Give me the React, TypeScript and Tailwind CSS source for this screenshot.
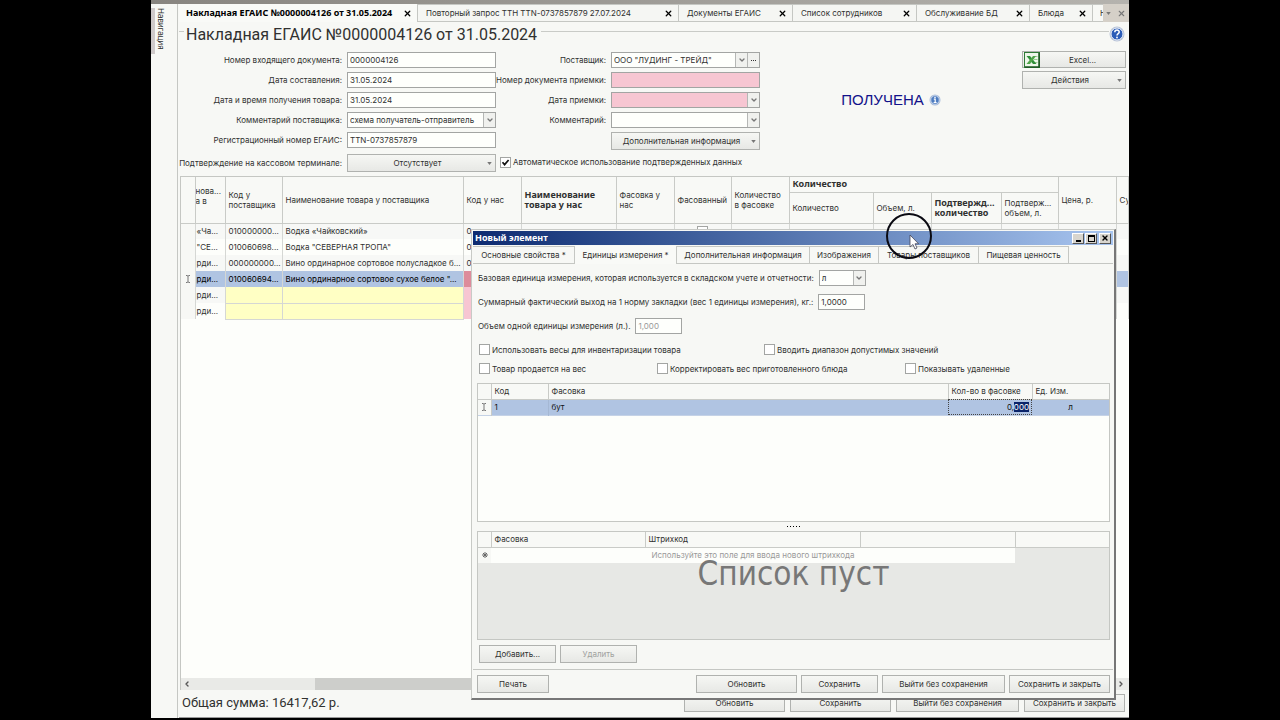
import React from 'react';
import { ChevronDown, ChevronLeft, ChevronRight, X } from 'lucide-react';

const documentTabs = [
  { title: 'Повторный запрос ТТН TTN-0737857879 27.07.2024', width: 'w-[261px]' },
  { title: 'Документы ЕГАИС', width: 'w-[114px]' },
  { title: 'Список сотрудников', width: 'w-[124px]' },
  { title: 'Обслуживание БД', width: 'w-[113px]' },
  { title: 'Блюда', width: 'w-[63px]' },
];

const dialogTabs = [
  { title: 'Основные свойства *', width: 'w-[102px]' },
  { title: 'Единицы измерения *', width: 'w-[102px]', active: true },
  { title: 'Дополнительная информация', width: 'w-[133px]' },
  { title: 'Изображения', width: 'w-[69px]' },
  { title: 'Товары поставщиков', width: 'w-[100px]' },
  { title: 'Пищевая ценность', width: 'w-[90px]' },
];

const invoiceRows = [
  { short: '«Ча...', code: '010000000...', name: 'Водка «Чайковский»', own: '0' },
  { short: '"СЕ...', code: '010060698...', name: 'Водка "СЕВЕРНАЯ ТРОПА"', own: '0' },
  { short: 'рди...', code: '000000000...', name: 'Вино ординарное сортовое полусладкое б...', own: '0' },
  { short: 'рди...', code: '010060694...', name: 'Вино ординарное сортовое сухое белое "...', own: '', selected: true },
  { short: 'рди...', code: '', name: '', own: '' },
  { short: 'рди...', code: '', name: '', own: '' },
];

const Arrow = ({ className = '' }: { className?: string }) => (
  <svg viewBox="0 0 6 4" className={`h-[3px] w-[5px] shrink-0 fill-[#777] ${className}`}>
    <path d="M0 0h6L3 4z" />
  </svg>
);

const EditMark = () => (
  <svg viewBox="0 0 6 8" className="mx-auto h-2 w-[6px]" fill="none" stroke="#777">
    <path d="M1 .5h1.2L3 1.2 3.8.5H5M1 7.5h1.2l.8-.7.8.7H5M3 1v6" />
  </svg>
);

interface FieldProps {
  id: string;
  label: string;
  value?: string;
  kind?: 'text' | 'select';
  pink?: boolean;
  more?: boolean;
}

const Field: React.FC<FieldProps> = ({ id, label, value = '', kind = 'text', pink, more }) => (
  <div className="flex h-5 items-center justify-end gap-[5px]">
    <label htmlFor={id} className="whitespace-nowrap">
      {label}
    </label>
    <div
      className={`flex h-4 w-[149px] shrink-0 border border-[#a3a5a3] ${
        pink ? 'bg-[#f7c6d2]' : 'bg-[#fefffc]'
      }`}
    >
      {kind === 'text' ? (
        <input id={id} defaultValue={value} className="w-full min-w-0 px-[2px] outline-none" />
      ) : (
        <div className="relative flex min-w-0 flex-1">
          <select id={id} className="w-full appearance-none pl-[2px] outline-none">
            <option>{value}</option>
          </select>
          <span className="pointer-events-none absolute inset-y-0 right-0 flex w-3 items-center justify-center border-l border-[#b5b7b5] bg-[#f0f1ee]">
            <ChevronDown size={8} strokeWidth={4} className="text-[#777]" />
          </span>
        </div>
      )}
      {more && (
        <button aria-label="Выбрать" className="flex w-3 items-center justify-center gap-px border-l border-[#b5b7b5] bg-[#f0f1ee]">
          <i className="size-px bg-[#333]" />
          <i className="size-px bg-[#333]" />
          <i className="size-px bg-[#333]" />
        </button>
      )}
    </div>
  </div>
);

const Button: React.FC<{
  children: React.ReactNode;
  className?: string;
  menu?: boolean;
  disabled?: boolean;
}> = ({ children, className = '', menu, disabled }) => (
  <button
    disabled={disabled}
    className={`flex h-[18px] shrink-0 items-center justify-center whitespace-nowrap border border-[#b0b2af] bg-linear-to-b from-[#f6f7f4] to-[#e7e8e5] disabled:text-[#a0a19e] ${className}`}
  >
    {menu ? (
      <>
        <span className="flex-1">{children}</span>
        <Arrow className="mr-[3px]" />
      </>
    ) : (
      children
    )}
  </button>
);

const Check: React.FC<{ label: string; className?: string; checked?: boolean }> = ({
  label,
  className = '',
  checked,
}) => (
  <label className={`flex shrink-0 items-center gap-[2px] whitespace-nowrap ${className}`}>
    <span className="relative flex size-[11px]">
      <input
        type="checkbox"
        defaultChecked={checked}
        className="size-[11px] appearance-none border border-[#a3a5a3] bg-white"
      />
      {checked && (
        <svg viewBox="0 0 11 11" className="pointer-events-none absolute inset-0" fill="none" stroke="#111" strokeWidth="1.7">
          <path d="M2.5 5.2 4.6 7.6 8.6 3" />
        </svg>
      )}
    </span>
    {label}
  </label>
);

const HelpIcon = () => (
  <svg viewBox="0 0 16 16" className="size-4 shrink-0">
    <circle cx="8" cy="8" r="7.5" fill="#b9c4d8" />
    <circle cx="8" cy="8" r="6" fill="#2c5db8" stroke="#e9effa" />
    <path d="M5.8 6.3c0-3 4.6-2.8 4.4-.2C10.1 7.7 8 7.5 8 9.5" fill="none" stroke="#fff" strokeWidth="1.5" />
    <circle cx="8" cy="11.5" r=".9" fill="#fff" />
  </svg>
);

const InfoIcon = () => (
  <svg viewBox="0 0 12 12" className="size-3">
    <circle cx="6" cy="6" r="5.5" fill="#a9bcd9" />
    <circle cx="6" cy="6" r="4.2" fill="#4d7cc0" stroke="#dde7f5" strokeWidth=".7" />
    <path d="M4.8 5.2h1.4v3M4.6 8.5h3" fill="none" stroke="#fff" strokeWidth="1.2" />
    <circle cx="6" cy="3.5" r=".8" fill="#fff" />
  </svg>
);

const ExcelIcon = () => (
  <svg viewBox="0 0 16 16" className="size-4 shrink-0">
    <rect x=".5" y=".5" width="15" height="15" fill="#eef6ea" stroke="#2f7a35" />
    <path d="M15 1v14H1" fill="none" stroke="#1d5522" strokeWidth="1.5" />
    <path d="M10 4.5h3.5M10 7.5h3.5M10.5 10.5h3" stroke="#9ccf94" />
    <path d="M2.5 4H6l6.5 8H9z" fill="#2f8f38" />
    <path d="M12 4H9L2.5 12H6z" fill="#4fa549" />
  </svg>
);

const DocumentTabs = () => (
  <div role="tablist" className="flex h-[18px] overflow-hidden">
    <div role="tab" aria-selected="true" className="flex w-[239px] shrink-0 items-center justify-between border-r border-[#c5c7c3] bg-[#f9faf7] pl-[7px] pr-[5px] text-black">
      <span className="whitespace-nowrap font-['Noto_Sans',sans-serif] text-[9px] font-bold">
        Накладная ЕГАИС №0000004126 от 31.05.2024
      </span>
      <X size={9} strokeWidth={3.5} />
    </div>
    {documentTabs.map((tab) => (
      <div
        key={tab.title}
        role="tab"
        className={`flex shrink-0 items-center justify-between border-r border-b border-t border-[#c5c7c3] bg-[#f5f6f3] pl-[8px] pr-[5px] ${tab.width}`}
      >
        <span className="whitespace-nowrap">{tab.title}</span>
        <X size={9} strokeWidth={3.5} className="text-black" />
      </div>
    ))}
    <div role="tab" className="w-[10px] shrink-0 overflow-hidden border-b border-t border-[#c5c7c3] pl-[7px] leading-4">
      Н
    </div>
    <div className="flex flex-1 items-center justify-around bg-[#d5d0c8]">
      <Arrow />
      <X size={9} strokeWidth={3} className="text-[#777]" />
    </div>
  </div>
);

const InvoiceTable = () => (
  <table className="w-full table-fixed border-collapse text-left">
    <colgroup>
      <col className="w-[14px]" />
      <col className="w-[30px]" />
      <col className="w-[57px]" />
      <col className="w-[181px]" />
      <col className="w-[58px]" />
      <col className="w-[95px]" />
      <col className="w-[58px]" />
      <col className="w-[57px]" />
      <col className="w-[58px]" />
      <col className="w-[84px]" />
      <col className="w-[58px]" />
      <col className="w-[70px]" />
      <col className="w-[57px]" />
      <col className="w-[58px]" />
      <col />
    </colgroup>
    <thead className="bg-[#f8f9f6] leading-[10px] [&_th]:overflow-hidden [&_th]:border-r [&_th]:border-b [&_th]:border-[#c9cbc7] [&_th]:px-[3px] [&_th]:py-0">
      <tr className="h-[15px] [&_th]:font-normal">
        <th rowSpan={2} />
        <th rowSpan={2} className="whitespace-nowrap !px-0 !pb-2">нова...<br />а в</th>
        <th rowSpan={2}>Код у поставщика</th>
        <th rowSpan={2}>Наименование товара у поставщика</th>
        <th rowSpan={2}>Код у нас</th>
        <th rowSpan={2} className="font-['Noto_Sans',sans-serif] text-[9px] !font-bold">Наименование товара у нас</th>
        <th rowSpan={2}>Фасовка у нас</th>
        <th rowSpan={2}>Фасованный</th>
        <th rowSpan={2} className="whitespace-nowrap">Количество<br />в фасовке</th>
        <th colSpan={4} className="font-['Noto_Sans',sans-serif] text-[9px] !font-bold">Количество</th>
        <th rowSpan={2}>Цена, р.</th>
        <th rowSpan={2} className="whitespace-nowrap">Сумма</th>
      </tr>
      <tr className="h-[31px] [&_th]:whitespace-nowrap [&_th]:font-normal">
        <th>Количество</th>
        <th>Объем, л.</th>
        <th className="font-['Noto_Sans',sans-serif] text-[9px] !font-bold">Подтвержд...<br />количество</th>
        <th>Подтверж...<br />объем, л.</th>
      </tr>
    </thead>
    <tbody>
      {invoiceRows.map((row, index) => {
        const pending = index > 3;
        return (
          <tr
            key={index}
            className={`h-4 whitespace-nowrap leading-[15px] [&_td]:overflow-hidden [&_td]:border-r [&_td]:border-[#d5d7d4] [&_td]:px-[3px] [&_td]:py-0 ${
              row.selected ? 'bg-[#b0c4e2] text-black' : index % 2 ? 'bg-[#fdfefb]' : 'bg-[#f7f8f6]'
            }`}
          >
            <td className="bg-[#f7f8f5] !px-0">{row.selected && <EditMark />}</td>
            <td className="!px-px">{row.short}</td>
            <td className={pending ? 'border-b border-b-[#eeeebb] bg-[#ffffc4]' : ''}>{row.code}</td>
            <td className={pending ? 'border-b border-b-[#eeeebb] bg-[#ffffc4]' : ''}>{row.name}</td>
            <td className={row.selected ? 'bg-[#dd8c9b]' : pending ? 'bg-[#f7c6d2]' : ''}>{row.own}</td>
            <td />
            <td />
            <td className="text-center">
              <input type="checkbox" aria-label="Фасованный" className="size-[11px] appearance-none border border-[#a3a5a3] bg-white align-middle" />
            </td>
            <td />
            <td />
            <td />
            <td />
            <td />
            <td />
            <td />
          </tr>
        );
      })}
    </tbody>
  </table>
);

const UnitsTable = () => (
  <div className="h-[139px] border border-[#c5c7c3] bg-[#fdfefb]">
    <table className="w-full table-fixed border-collapse text-left [&_td]:px-[3px] [&_td]:py-0 [&_th]:border-r [&_th]:border-b [&_th]:border-[#c9cbc7] [&_th]:px-[3px] [&_th]:py-0 [&_th]:font-normal">
      <colgroup>
        <col className="w-[13px]" />
        <col className="w-[57px]" />
        <col />
        <col className="w-[84px]" />
        <col className="w-[77px]" />
      </colgroup>
      <thead className="bg-[#f8f9f6]">
        <tr className="h-[15px]">
          <th />
          <th>Код</th>
          <th>Фасовка</th>
          <th className="whitespace-nowrap !pr-0">Кол-во в фасовке</th>
          <th className="!border-r-0">Ед. Изм.</th>
        </tr>
      </thead>
      <tbody>
        <tr className="h-4 border-b border-[#c5d2e6] bg-[#b0c4e2] text-[#111]">
          <td className="border-r border-[#c9cbc7] bg-[#f7f8f5] !px-0"><EditMark /></td>
          <td className="border-r border-[#a5b8d4]">1</td>
          <td>бут</td>
          <td className="text-right outline-1 -outline-offset-1 outline-[#444] outline-dotted">
            0,<span className="bg-[#0a246a] text-white">000</span>
          </td>
          <td className="text-center">л</td>
        </tr>
      </tbody>
    </table>
  </div>
);

const BarcodeTable = () => (
  <div className="relative h-[109px] border border-[#c5c7c3] bg-[#e7e8e5]">
    <table className="w-full table-fixed border-collapse text-left [&_td]:py-0 [&_th]:border-r [&_th]:border-b [&_th]:border-[#c9cbc7] [&_th]:px-[3px] [&_th]:py-0 [&_th]:font-normal">
      <colgroup>
        <col className="w-[13px]" />
        <col className="w-[154px]" />
        <col className="w-[215px]" />
        <col className="w-[155px]" />
        <col />
      </colgroup>
      <thead className="bg-[#f8f9f6]">
        <tr className="h-[15px]">
          <th />
          <th>Фасовка</th>
          <th>Штрихкод</th>
          <th />
          <th className="!border-r-0" />
        </tr>
      </thead>
      <tbody>
        <tr className="h-4">
          <td className="bg-[#f7f8f5] text-center">
            <svg viewBox="0 0 6 6" className="mx-auto size-[6px]" stroke="#666">
              <path d="M3 0v6M0 3h6M1 1l4 4M5 1 1 5" />
            </svg>
          </td>
          <td colSpan={3} className="bg-[#fdfefb] text-center text-[#999]">
            Используйте это поле для ввода нового штрихкода
          </td>
          <td />
        </tr>
      </tbody>
    </table>
    <p className="absolute inset-x-0 top-[22px] text-center font-['DejaVu_Sans_Condensed','DejaVu_Sans',sans-serif] text-[33px] leading-10 text-[#777]">
      Список пуст
    </p>
  </div>
);

const ElementDialog = () => (
  <section
    role="dialog"
    aria-label="Новый элемент"
    className="absolute top-[229px] right-[13px] bottom-[18px] left-80 flex flex-col border border-r-2 border-b-2 border-[#c8cac6] border-r-[#777] border-b-[#777] bg-[#f7f8f5] p-px"
  >
    <header className="flex h-[14px] shrink-0 items-center justify-between bg-linear-to-r from-[#0d2a70] to-[#a9c6f0] pl-[2px] pr-[2px] font-['Noto_Sans',sans-serif] text-[9px] font-bold text-white">
      <h2>Новый элемент</h2>
      <div className="flex gap-px">
        <button aria-label="Свернуть" className="flex h-[11px] w-3 items-end justify-center border border-r-[#555] border-b-[#555] border-white bg-[#d8d5ce] pb-px">
          <i className="h-[2px] w-[5px] bg-black" />
        </button>
        <button aria-label="Развернуть" className="mr-px flex h-[11px] w-3 items-center justify-center border border-r-[#555] border-b-[#555] border-white bg-[#d8d5ce]">
          <i className="h-[7px] w-[7px] border border-t-2 border-black" />
        </button>
        <button aria-label="Закрыть" className="flex h-[11px] w-3 items-center justify-center border border-r-[#555] border-b-[#555] border-white bg-[#d8d5ce] text-black">
          <X size={8} strokeWidth={4} />
        </button>
      </div>
    </header>
    <div role="tablist" className="mt-px flex h-[18px] shrink-0 border-b border-[#c5c7c3]">
      {dialogTabs.map((tab) => (
        <button
          key={tab.title}
          role="tab"
          aria-selected={!!tab.active}
          className={`shrink-0 whitespace-nowrap border-r border-[#c5c7c3] text-center ${tab.width} ${
            tab.active ? '-mb-px bg-[#f9faf7]' : 'border-t'
          }`}
        >
          {tab.title}
        </button>
      ))}
    </div>
    <div className="flex flex-1 flex-col pr-[3px] pl-1">
      <div className="mt-[6px] flex h-4 items-center gap-[5px] pl-px">
        <label htmlFor="baseUnit" className="whitespace-nowrap">
          Базовая единица измерения, которая используется в складском учете и отчетности:
        </label>
        <div className="relative flex h-4 w-[47px] border border-[#a3a5a3] bg-[#fefffc]">
          <select id="baseUnit" className="w-full appearance-none pl-[2px] outline-none">
            <option>л</option>
          </select>
          <span className="pointer-events-none absolute inset-y-0 right-0 flex w-3 items-center justify-center border-l border-[#b5b7b5] bg-[#f0f1ee]">
            <ChevronDown size={8} strokeWidth={4} className="text-[#777]" />
          </span>
        </div>
      </div>
      <div className="mt-2 flex h-4 items-center gap-[5px] pl-px">
        <label htmlFor="yield" className="whitespace-nowrap">
          Суммарный фактический выход на 1 норму закладки (вес 1 единицы измерения), кг.:
        </label>
        <input id="yield" defaultValue="1,0000" className="h-4 w-[47px] border border-[#a3a5a3] bg-[#fefffc] px-[2px]" />
      </div>
      <div className="mt-2 flex h-4 items-center gap-[5px] pl-px">
        <label htmlFor="volume">Объем одной единицы измерения (л.).</label>
        <input id="volume" disabled defaultValue="1,000" className="h-4 w-[47px] border border-[#a3a5a3] bg-[#fefffc] px-[2px] text-[#999]" />
      </div>
      <div className="mt-2 flex h-[15px] pl-[2px]">
        <Check label="Использовать весы для инвентаризации товара" className="w-[285px]" />
        <Check label="Вводить диапазон допустимых значений" />
      </div>
      <div className="mt-1 flex h-[15px] pl-[2px]">
        <Check label="Товар продается на вес" className="w-[178px]" />
        <Check label="Корректировать вес приготовленного блюда" className="w-[248px]" />
        <Check label="Показывать удаленные" />
      </div>
      <div className="mt-[7px]">
        <UnitsTable />
      </div>
      <div className="flex h-[9px] items-center justify-center gap-[2px]">
        {[0, 1, 2, 3, 4].map((dot) => (
          <i key={dot} className="size-px bg-black" />
        ))}
      </div>
      <BarcodeTable />
      <div className="mt-[5px] flex gap-1 pl-[2px]">
        <Button className="w-[77px]">Добавить...</Button>
        <Button className="w-[77px]" disabled>
          Удалить
        </Button>
      </div>
    </div>
    <footer className="flex h-7 shrink-0 items-center justify-end gap-1 border-t border-[#c5c7c3] pr-[3px] pl-1">
      <Button className="mr-auto w-[72px]">Печать</Button>
      <Button className="w-[101px]">Обновить</Button>
      <Button className="w-[77px]">Сохранить</Button>
      <Button className="w-[123px]">Выйти без сохранения</Button>
      <Button className="w-[101px]">Сохранить и закрыть</Button>
    </footer>
  </section>
);

export default function App() {
  return (
    <div className="min-h-screen bg-black px-[151px] pb-[2px] font-['Inter','Liberation_Sans',sans-serif] text-[8px] leading-3 text-[#303130]">
      <div className="relative flex h-[calc(100vh-2px)] flex-col overflow-hidden bg-[#f7f8f5]">
        <div className="h-1 shrink-0 bg-linear-to-r from-[#888580] to-[#b5b3ae]" />
        <div className="flex min-h-0 flex-1">
          <nav className="w-[26px] shrink-0 pt-1">
            <button className="flex h-[46px] w-4 items-center border-l-4 border-[#cfcaca] [writing-mode:vertical-rl]">
              Навигация
            </button>
          </nav>
          <main className="flex min-w-0 flex-1 flex-col border-l border-[#c5c7c3] pl-px">
            <DocumentTabs />
            <div className="flex h-7 shrink-0 pt-px">
              <i className="mt-2 h-px w-[5px] bg-[#c9cbc7]" />
              <h1 className="mr-1 ml-[2px] whitespace-nowrap font-['Roboto',sans-serif] text-[16px] leading-6">
                Накладная ЕГАИС №0000004126 от 31.05.2024
              </h1>
              <i className="mt-2 h-px flex-1 bg-[#c9cbc7]" />
              <span className="pt-[3px] pr-1">
                <HelpIcon />
              </span>
            </div>
            <form className="flex shrink-0 items-start">
              <div className="flex w-[317px] shrink-0 flex-col">
                <Field id="incoming" label="Номер входящего документа:" value="0000004126" />
                <Field id="created" label="Дата составления:" value="31.05.2024" />
                <Field id="received" label="Дата и время получения товара:" value="31.05.2024" />
                <Field id="supplierNote" label="Комментарий поставщика:" value="схема получатель-отправитель" kind="select" />
                <Field id="regNumber" label="Регистрационный номер ЕГАИС:" value="TTN-0737857879" />
                <div className="flex h-[26px] items-center justify-end gap-[5px]">
                  <span className="whitespace-nowrap">Подтверждение на кассовом терминале:</span>
                  <Button menu className="w-[149px]">Отсутствует</Button>
                </div>
              </div>
              <div className="flex w-[264px] shrink-0 flex-col">
                <Field id="supplier" label="Поставщик:" value={'ООО "ЛУДИНГ - ТРЕЙД"'} kind="select" more />
                <Field id="acceptNumber" label="Номер документа приемки:" pink />
                <Field id="acceptDate" label="Дата приемки:" kind="select" pink />
                <Field id="note" label="Комментарий:" kind="select" />
                <div className="flex h-[22px] items-center justify-end">
                  <Button menu className="w-[149px]">Дополнительная информация</Button>
                </div>
                <Check checked label="Автоматическое использование подтвержденных данных" className="h-5 pl-1" />
              </div>
              <div className="flex flex-1 items-center justify-center gap-[5px] pt-10 text-[15px] leading-5 text-[#12128a]">
                <span className="font-['Liberation_Sans',Arial,sans-serif]">ПОЛУЧЕНА</span>
                <InfoIcon />
              </div>
              <div className="flex w-[107px] shrink-0 flex-col gap-[3px] pt-px">
                <button className="flex h-[17px] w-[104px] items-center border border-[#b0b2af] bg-linear-to-b from-[#f6f7f4] to-[#e7e8e5] pl-px">
                  <ExcelIcon />
                  <span className="flex-1">Excel...</span>
                </button>
                <Button menu className="w-[104px]">Действия</Button>
              </div>
            </form>
            <div className="ml-px flex min-h-0 flex-1 flex-col border-t border-l border-[#c5c7c3] bg-[#fdfefb]">
              <div className="min-h-0 flex-1 overflow-hidden">
                <InvoiceTable />
              </div>
              <div className="flex h-3 shrink-0 items-center justify-between bg-[#e9eae7] text-[#555]">
                <button aria-label="Назад" className="w-[134px] pl-[2px]">
                  <ChevronLeft size={8} strokeWidth={4} />
                </button>
                <i className="h-3 w-[600px] bg-[#cdcecb]" />
                <button aria-label="Вперёд" className="flex flex-1 justify-end pr-1">
                  <ChevronRight size={8} strokeWidth={4} />
                </button>
              </div>
            </div>
            <footer className="flex h-7 shrink-0 items-center gap-[5px] border-b border-[#999] pr-1 pb-[2px] pl-[3px]">
              <output className="mr-auto font-['Roboto',sans-serif] text-[13px] leading-5">
                Общая сумма: 16417,62 р.
              </output>
              <Button className="w-[101px]">Обновить</Button>
              <Button className="w-[101px]">Сохранить</Button>
              <Button className="w-[123px]">Выйти без сохранения</Button>
              <Button className="w-[101px]">Сохранить и закрыть</Button>
            </footer>
          </main>
        </div>
        <ElementDialog />
        <svg viewBox="0 0 48 48" className="pointer-events-none absolute top-[212px] left-[734px] size-12" fill="none">
          <circle cx="24" cy="24" r="22" stroke="#0a0a12" strokeWidth="2" />
          <path d="M25 23v12l3-2.5 2 4.5 2-1-2-4.2h3.6z" fill="#fff" stroke="#445" strokeWidth=".8" />
        </svg>
      </div>
    </div>
  );
}
